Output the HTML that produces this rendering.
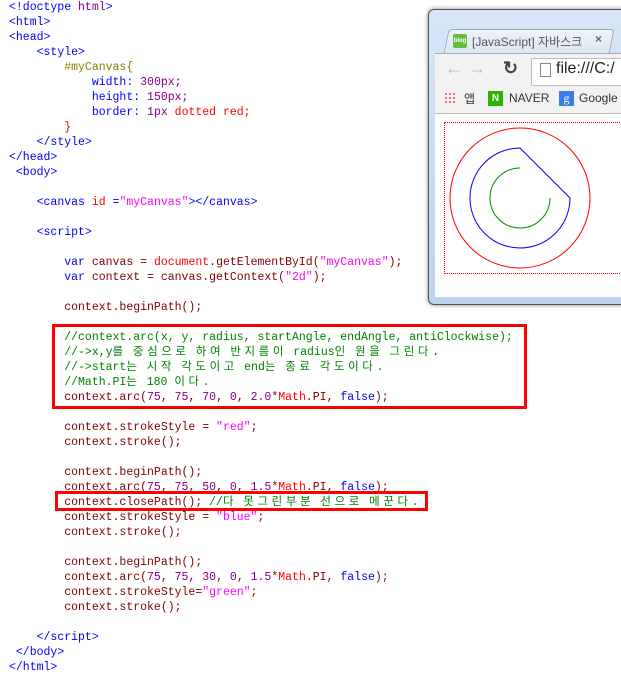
<!DOCTYPE html>
<html><head><style>
body{margin:0;width:621px;height:690px;background:#fff;position:relative;overflow:hidden}
pre{position:absolute;left:9px;top:0;margin:0;font:11.5px/15px "Liberation Mono","DejaVu Sans Mono","Noto Sans CJK KR",monospace;color:#800000}
.t{color:#0000ff}.p{color:#8b008b}.s{color:#ff00ff}.r{color:#ff0000}.c{color:#008000}.o{color:#808000}.k{color:#0000ff}.n{color:#800080}
.h{letter-spacing:3.6px;font-family:"Noto Sans CJK KR",sans-serif;line-height:0}
.box{position:absolute;border:3px solid #ff0000}
</style></head><body>
<pre><span class="t">&lt;!doctype <span class="p">html</span>&gt;</span>
<span class="t">&lt;html&gt;</span>
<span class="t">&lt;head&gt;</span>
    <span class="t">&lt;style&gt;</span>
        <span class="o">#myCanvas{</span>
            <span class="t">width:</span> <span class="n">300px;</span>
            <span class="t">height:</span> <span class="n">150px;</span>
            <span class="t">border:</span> <span class="n">1px</span> <span class="r">dotted red;</span>
        <span class="r">}</span>
    <span class="t">&lt;/style&gt;</span>
<span class="t">&lt;/head&gt;</span>
 <span class="t">&lt;body&gt;</span>

    <span class="t">&lt;canvas <span class="r">id</span> =<span class="s">"myCanvas"</span>&gt;&lt;/canvas&gt;</span>

    <span class="t">&lt;script&gt;</span>

        <span class="k">var</span> canvas = <span class="r">document</span>.getElementById(<span class="s">"myCanvas"</span>);
        <span class="k">var</span> context = canvas.getContext(<span class="s">"2d"</span>);

        context.beginPath();

        <span class="c">//context.arc(x, y, radius, startAngle, endAngle, antiClockwise);</span>
        <span class="c">//-&gt;x,y<span class="h">를 중심으로 하여 반지름이 </span>radius<span class="h">인 원을 그린다</span>.</span>
        <span class="c">//-&gt;start<span class="h">는 시작 각도이고 </span>end<span class="h">는 종료 각도이다</span>.</span>
        <span class="c">//Math.PI<span class="h">는 </span>180 <span class="h">이다</span>.</span>
        context.arc(<span class="n">75</span>, <span class="n">75</span>, <span class="n">70</span>, <span class="n">0</span>, <span class="n">2.0</span>*<span class="r">Math</span>.PI, <span class="k">false</span>);

        context.strokeStyle = <span class="s">"red"</span>;
        context.stroke();

        context.beginPath();
        context.arc(<span class="n">75</span>, <span class="n">75</span>, <span class="n">50</span>, <span class="n">0</span>, <span class="n">1.5</span>*<span class="r">Math</span>.PI, <span class="k">false</span>);
        context.closePath(); <span class="c">//<span class="h">다 못그린부분 선으로 메꾼다</span>.</span>
        context.strokeStyle = <span class="s">"blue"</span>;
        context.stroke();

        context.beginPath();
        context.arc(<span class="n">75</span>, <span class="n">75</span>, <span class="n">30</span>, <span class="n">0</span>, <span class="n">1.5</span>*<span class="r">Math</span>.PI, <span class="k">false</span>);
        context.strokeStyle=<span class="s">"green"</span>;
        context.stroke();

    <span class="t">&lt;/script&gt;</span>
 <span class="t">&lt;/body&gt;</span>
<span class="t">&lt;/html&gt;</span></pre>
<div class="box" style="left:52px;top:324px;width:469px;height:79px"></div>
<div class="box" style="left:55px;top:491px;width:367px;height:14px"></div>

<div style="position:absolute;left:428px;top:9px;width:200px;height:294px;background:linear-gradient(#d6e6f7,#bcd3ee);border:1px solid #555;border-radius:6px 0 0 6px;box-shadow:0 0 4px rgba(0,0,0,.5)"></div>
<div style="position:absolute;left:446px;top:29px;width:164px;height:24px;background:linear-gradient(#eef3f9,#dde6f0);border:1px solid #9aaabb;border-bottom:none;border-radius:4px 4px 0 0;transform:skewX(-12deg)"></div>
<div style="position:absolute;left:453px;top:34px;width:14px;height:14px;background:#5fbf3f;border-radius:2px;font:bold 6px sans-serif;color:#fff;text-align:center;line-height:14px">blog</div>
<div style="position:absolute;left:472px;top:33px;font:12px 'Liberation Sans','Noto Sans CJK KR',sans-serif;color:#555">[JavaScript] 자바스크</div>
<div style="position:absolute;left:595px;top:32px;font:bold 12px sans-serif;color:#666">×</div>
<div style="position:absolute;left:435px;top:53px;width:190px;height:60px;background:#f2f2f2;border-top:1px solid #aab"></div>
<div style="position:absolute;left:445px;top:58px;font:18px sans-serif;color:#bbb">← →</div>
<div style="position:absolute;left:503px;top:58px;font:bold 18px sans-serif;color:#444">↻</div>
<div style="position:absolute;left:531px;top:58px;width:95px;height:26px;background:#fff;border:1px solid #bbb;border-radius:2px"></div>
<div style="position:absolute;left:540px;top:63px;width:9px;height:12px;border:1px solid #888;background:#fff"></div>
<div style="position:absolute;left:556px;top:60px;font:16px 'Liberation Sans',sans-serif;color:#222">file:///C:/</div>
<div style="position:absolute;left:444px;top:92px;width:12px;height:12px;background:radial-gradient(circle,#e44 30%,transparent 32%) 0 0/4px 4px"></div>
<div style="position:absolute;left:464px;top:90px;font:12px 'Noto Sans CJK KR',sans-serif;color:#333">앱</div>
<div style="position:absolute;left:488px;top:91px;width:15px;height:15px;background:#2db400;color:#fff;font:bold 10px sans-serif;text-align:center;line-height:15px">N</div>
<div style="position:absolute;left:509px;top:91px;font:12px 'Liberation Sans',sans-serif;color:#333">NAVER</div>
<div style="position:absolute;left:559px;top:91px;width:15px;height:15px;background:#3b7ce8;color:#fff;font:12px serif;text-align:center;line-height:15px">g</div>
<div style="position:absolute;left:579px;top:91px;font:12px 'Liberation Sans',sans-serif;color:#333">Google</div>
<div style="position:absolute;left:435px;top:113px;width:190px;height:183px;background:#fff;border-top:1px solid #bbb"></div>
<div style="position:absolute;left:444px;top:122px;width:300px;height:150px;border:1px dotted #f00"></div>
<svg style="position:absolute;left:445px;top:123px" width="176" height="150">
<circle cx="75" cy="75" r="70" fill="none" stroke="#f00"/>
<path d="M125 75 A50 50 0 1 1 75 25 Z" fill="none" stroke="#00f"/>
<path d="M105 75 A30 30 0 1 1 75 45" fill="none" stroke="#080"/>
</svg>
</body></html>
